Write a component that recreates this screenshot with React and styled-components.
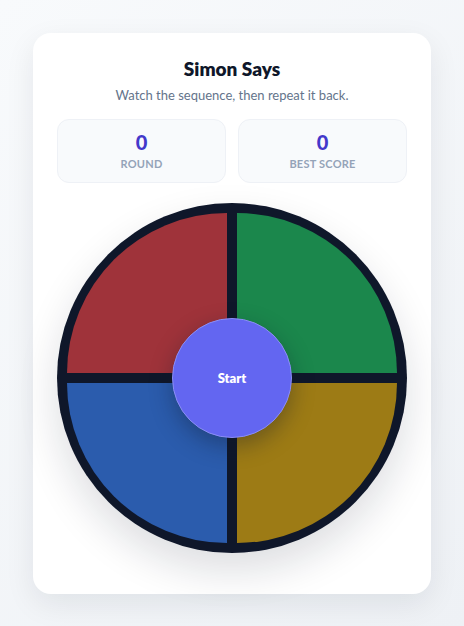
import React, { useState } from 'react'
import styled, { createGlobalStyle } from 'styled-components'

const GlobalStyle = createGlobalStyle`
  * { box-sizing: border-box; }
  html, body {
    margin: 0;
    min-height: 100%;
  }
  body {
    font-family: Lato, "Noto Sans", "Liberation Sans", sans-serif;
    background: linear-gradient(135deg, #f8fafc 0%, #eef1f5 100%);
    min-height: 626px;
  }
`

const Page = styled.main`
  padding: 33px;
  display: flex;
  justify-content: center;
`

const Card = styled.section`
  width: 398px;
  background: #ffffff;
  border-radius: 18px;
  box-shadow: 0 10px 30px rgba(15, 23, 42, 0.08);
  padding: 23px 24px 41px;
  display: flex;
  flex-direction: column;
  align-items: center;
`

const Title = styled.h1`
  margin: 0;
  font-size: 19px;
  line-height: 26px;
  font-weight: 800;
  color: #0f172a;
`

const Subtitle = styled.p`
  margin: 3px 0 0;
  font-size: 13px;
  line-height: 20px;
  color: #64748b;
`

const Stats = styled.div`
  margin-top: 14px;
  width: 100%;
  display: grid;
  grid-template-columns: 1fr 1fr;
  gap: 12px;
`

const Stat = styled.div`
  height: 64px;
  border-radius: 12px;
  background: #f8fafc;
  border: 1px solid #eef1f6;
  display: flex;
  flex-direction: column;
  align-items: center;
  justify-content: center;
  gap: 4px;
`

const StatValue = styled.span`
  font-size: 20px;
  line-height: 22px;
  font-weight: 900;
  color: #4338ca;
`

const StatLabel = styled.span`
  font-size: 11px;
  line-height: 14px;
  font-weight: 700;
  letter-spacing: 0.02em;
  text-transform: uppercase;
  color: #94a3b8;
`

const Board = styled.div`
  position: relative;
  margin-top: 20px;
  width: 350px;
  height: 350px;
  border-radius: 50%;
  background: #0f172a;
  padding: 10px;
  display: grid;
  grid-template-columns: 1fr 1fr;
  grid-template-rows: 1fr 1fr;
  gap: 10px;
  box-shadow: 0 18px 40px rgba(15, 23, 42, 0.14);
`

const corners = {
  tl: '100% 0 0 0',
  tr: '0 100% 0 0',
  bl: '0 0 0 100%',
  br: '0 0 100% 0',
}

const Pad = styled.button`
  border: none;
  padding: 0;
  cursor: pointer;
  background: ${p => p.$color};
  border-radius: ${p => corners[p.$corner]};
  filter: brightness(${p => (p.$lit ? 1.4 : 1)});
`

const StartButton = styled.button`
  position: absolute;
  left: 50%;
  top: 50%;
  transform: translate(-50%, -50%);
  width: 120px;
  height: 120px;
  border-radius: 50%;
  border: 1px solid #8b8ef5;
  background: #6366f1;
  color: #ffffff;
  font-family: inherit;
  font-size: 13px;
  font-weight: 800;
  cursor: pointer;
  box-shadow: 0 8px 22px rgba(15, 23, 42, 0.35);
`

const pads = [
  { id: 'red', color: '#9f333a', corner: 'tl' },
  { id: 'green', color: '#1b874c', corner: 'tr' },
  { id: 'blue', color: '#2b5cad', corner: 'bl' },
  { id: 'yellow', color: '#9d7b15', corner: 'br' },
]

export default function App() {
  const [round] = useState(0)
  const [best] = useState(0)
  const [lit, setLit] = useState(null)

  return (
    <>
      <GlobalStyle />
      <Page>
        <Card>
          <Title>Simon Says</Title>
          <Subtitle>Watch the sequence, then repeat it back.</Subtitle>
          <Stats>
            <Stat>
              <StatValue>{round}</StatValue>
              <StatLabel>Round</StatLabel>
            </Stat>
            <Stat>
              <StatValue>{best}</StatValue>
              <StatLabel>Best Score</StatLabel>
            </Stat>
          </Stats>
          <Board>
            {pads.map(p => (
              <Pad
                key={p.id}
                aria-label={p.id}
                $color={p.color}
                $corner={p.corner}
                $lit={lit === p.id}
                onMouseDown={() => setLit(p.id)}
                onMouseUp={() => setLit(null)}
              />
            ))}
            <StartButton>Start</StartButton>
          </Board>
        </Card>
      </Page>
    </>
  )
}
